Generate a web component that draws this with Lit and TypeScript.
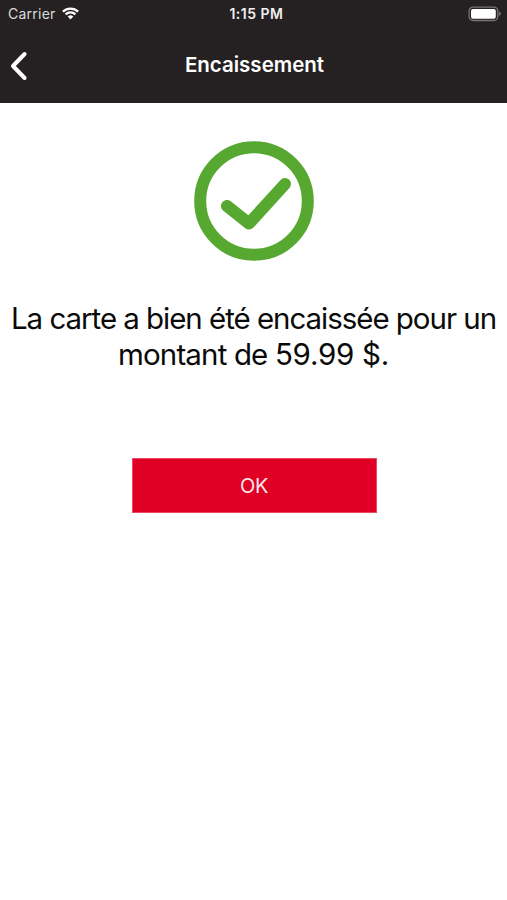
import { LitElement, html, css } from "lit";
import { customElement } from "lit/decorators.js";

@customElement("status-bar")
class StatusBar extends LitElement {
  static styles = css`
    :host {
      display: grid;
      grid-template-columns: 1fr auto 1fr;
      align-items: center;
      height: 27px;
      box-sizing: border-box;
      padding: 0 6px 0 8px;
      color: #f0f0f0;
      font-size: 14px;
    }
    .left { display: flex; align-items: center; gap: 6px; color: #dcdcdc; letter-spacing: 0.25px; }
    .time { font-weight: 600; font-size: 14px; letter-spacing: 0.5px; padding-left: 4px; }
    .right { display: flex; justify-content: flex-end; }
    svg { display: block; }
  `;
  render() {
    return html`
      <div class="left">
        <span>Carrier</span>
        <svg width="17" height="13" viewBox="0 0 17 13">
          <g fill="none" stroke="#fff" stroke-width="2.3">
            <path d="M0.9 4.6 A11 11 0 0 1 16.1 4.6" />
            <path d="M3.6 7.4 A7.1 7.1 0 0 1 13.4 7.4" />
          </g>
          <path d="M5.7 9.6 A4.1 4.1 0 0 1 11.3 9.6 L8.5 12.4 Z" fill="#fff" />
        </svg>
      </div>
      <div class="time">1:15 PM</div>
      <div class="right">
        <svg width="33" height="16" viewBox="0 0 33 16">
          <rect x="1.1" y="1.1" width="28.7" height="13.4" rx="4" fill="none" stroke="#777475" stroke-width="1.3" />
          <rect x="3" y="3" width="24.8" height="9.8" rx="2" fill="#fff" />
          <path d="M31 5.6 Q32.8 6.3 32.8 7.8 Q32.8 9.3 31 10 Z" fill="#777475" />
        </svg>
      </div>
    `;
  }
}

@customElement("nav-bar")
class NavBar extends LitElement {
  static styles = css`
    :host {
      display: grid;
      grid-template-columns: 40px 1fr 40px;
      align-items: center;
      height: 76px;
      color: #fff;
    }
    .back { display: block; margin: 2px 0 0 9px; }
    .title {
      text-align: center;
      font-size: 20.5px;
      font-weight: 600;
      line-height: 24px;
      padding-left: 2px;
    }
  `;
  render() {
    return html`
      <svg class="back" width="20" height="30" viewBox="0 0 20 30">
        <path d="M15.6 3 L4 15 L15.6 27" fill="none" stroke="#fff" stroke-width="4" stroke-linecap="round" stroke-linejoin="round" />
      </svg>
      <div class="title">Encaissement</div>
    `;
  }
}

@customElement("app-root")
class AppRoot extends LitElement {
  static styles = css`
    :host {
      display: flex;
      flex-direction: column;
      height: 900px;
      overflow: hidden;
      background: #fff;
      font-family: Inter, "Liberation Sans", sans-serif;
    }
    header { background: #252122; height: 103px; flex: none; }
    main {
      display: flex;
      flex-direction: column;
      align-items: center;
      padding-top: 38px;
    }
    .check { display: block; }
    .message {
      margin: 39px 0 0;
      font-size: 29.5px;
      line-height: 36px;
      text-align: center;
      color: #0a0a0a;
      white-space: nowrap;
    }
    .line { display: block; letter-spacing: -1.04px; }
    .words { letter-spacing: -0.85px; }
    .amount { letter-spacing: -0.25px; }
    .ok {
      margin: 86px 0 0 1px;
      width: 245px;
      height: 55px;
      padding: 0;
      border: 1px solid #ea4a5f;
      border-radius: 0;
      background: #e00025;
      color: #fbe6ea;
      font: inherit;
      font-size: 20px;
      letter-spacing: -0.3px;
    }
  `;
  render() {
    return html`
      <header>
        <status-bar></status-bar>
        <nav-bar></nav-bar>
      </header>
      <main>
        <svg class="check" width="120" height="120" viewBox="0 0 120 120">
          <circle cx="60" cy="60" r="53.8" fill="none" stroke="#56a831" stroke-width="12" />
          <path d="M33 65 L55 82.5 L91 43" fill="none" stroke="#56a831" stroke-width="12" stroke-linecap="round" stroke-linejoin="round" />
        </svg>
        <p class="message">
          <span class="line">La carte a bien été encaissée pour un</span>
          <span class="line"><span class="words">montant de </span><span class="amount">59.99 $.</span></span>
        </p>
        <button class="ok">OK</button>
      </main>
    `;
  }
}
